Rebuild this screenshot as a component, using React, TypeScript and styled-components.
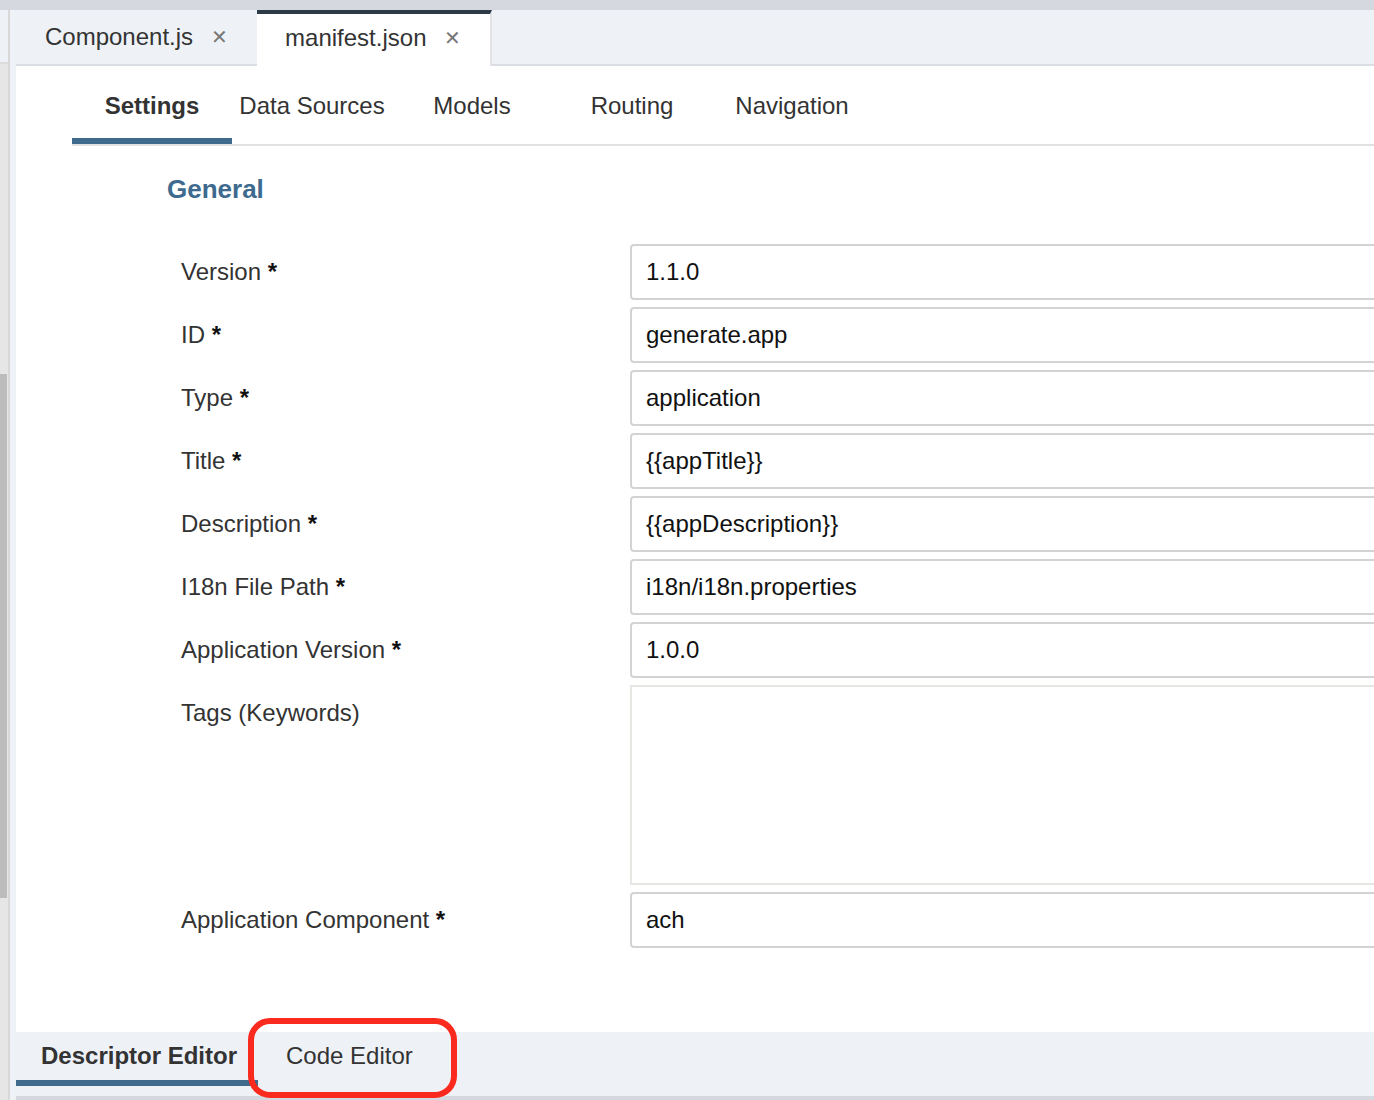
import React from "react";
import styled, { createGlobalStyle } from "styled-components";

const Global = createGlobalStyle`
  html, body { margin: 0; padding: 0; }
  body { font-family: "Liberation Sans", Arial, Helvetica, sans-serif; background: #eef2f7; overflow: hidden; }
  * { box-sizing: border-box; }
`;

const Page = styled.div`
  height: 1100px;
  display: flex;
  flex-direction: column;
  overflow: hidden;
`;

const TopStrip = styled.div`
  height: 10px;
  flex: none;
  background: #d5d9df;
`;

const Body = styled.div`
  flex: 1;
  display: flex;
  min-height: 0;
`;

const ScrollTrack = styled.div`
  width: 8px;
  flex: none;
  display: flex;
  flex-direction: column;
  background: #e6e6e6;
  border-right: 2px solid #d8d8d8;
  box-sizing: content-box;
`;

const TrackHead = styled.div`
  height: 54px;
  background: #eef2f7;
  border-bottom: 2px solid #dcdcdc;
`;

const Thumb = styled.div`
  margin-top: 310px;
  height: 524px;
  width: 7px;
  background: #bcbcbc;
`;

const Main = styled.div`
  flex: 1;
  display: flex;
  flex-direction: column;
  min-width: 0;
  padding-left: 6px;
  background: #eef2f7;
`;

const FileTabs = styled.div`
  height: 56px;
  flex: none;
  display: flex;
  border-bottom: 2px solid #dadde2;
`;

const FileTab = styled.div<{ $active?: boolean }>`
  height: ${(p) => (p.$active ? "56px" : "54px")};
  margin-bottom: ${(p) => (p.$active ? "-2px" : "0")};
  display: flex;
  align-items: center;
  gap: 18px;
  padding: 0 29px 4px ${(p) => (p.$active ? "28px" : "29px")};
  font-size: 24px;
  color: #333;
  background: ${(p) => (p.$active ? "#ffffff" : "transparent")};
  border-top: ${(p) => (p.$active ? "4px solid #2d3a48" : "4px solid transparent")};
  border-right: ${(p) => (p.$active ? "2px solid #e2e4e8" : "0")};
`;

const Close = styled.span`
  font-size: 20px;
  color: #777;
  line-height: 1;
`;

const Panel = styled.div`
  flex: 1;
  background: #ffffff;
  overflow: hidden;
  display: flex;
  flex-direction: column;
`;

const SubTabs = styled.div`
  margin-left: 56px;
  display: flex;
  border-bottom: 2px solid #e0e1e3;
  flex: none;
`;

const SubTab = styled.div<{ $active?: boolean }>`
  width: 160px;
  height: 78px;
  display: flex;
  align-items: center;
  justify-content: center;
  padding-top: 8px;
  font-size: 24px;
  color: #333;
  font-weight: ${(p) => (p.$active ? 700 : 400)};
  border-bottom: 6px solid ${(p) => (p.$active ? "#3f6a8c" : "transparent")};
`;

const Section = styled.div`
  padding: 28px 0 0 151px;
`;

const Heading = styled.h2`
  margin: 0;
  font-size: 26px;
  line-height: 30px;
  font-weight: 700;
  color: #3d6a8e;
`;

const Form = styled.div`
  margin-top: 40px;
  margin-left: 14px;
  display: grid;
  grid-template-columns: 449px 900px;
  row-gap: 7px;
`;

const Label = styled.div`
  font-size: 24px;
  line-height: 56px;
  color: #333;
  white-space: nowrap;
`;

const Star = styled.span`
  font-weight: 700;
  color: #111;
`;

const Field = styled.div<{ $tall?: boolean }>`
  height: ${(p) => (p.$tall ? "200px" : "56px")};
  border: 2px solid ${(p) => (p.$tall ? "#e6e6e2" : "#d3d3d3")};
  border-radius: ${(p) => (p.$tall ? "0" : "4px")};
  padding: 0 14px;
  display: flex;
  align-items: center;
  font-size: 24px;
  color: #111;
  background: #fff;
`;

const BottomBar = styled.div`
  height: 64px;
  flex: none;
  display: flex;
  align-items: flex-start;
`;

const EditorTab = styled.div<{ $active?: boolean }>`
  position: relative;
  height: 54px;
  display: flex;
  align-items: center;
  padding: 0 ${(p) => (p.$active ? "21px 0 25px" : "28px 0 28px")};
  font-size: 24px;
  color: #333;
  font-weight: ${(p) => (p.$active ? 700 : 400)};
  border-bottom: 6px solid ${(p) => (p.$active ? "#3f6a8c" : "transparent")};
`;

const Highlight = styled.div`
  position: absolute;
  left: -10px;
  top: -14px;
  width: 209px;
  height: 80px;
  border: 6px solid #fb2a1e;
  border-radius: 22px;
  pointer-events: none;
`;

const BottomStrip = styled.div`
  height: 4px;
  flex: none;
  background: #d5d9df;
`;

const fields: { label: string; required?: boolean; value: string; tall?: boolean }[] = [
  { label: "Version", required: true, value: "1.1.0" },
  { label: "ID", required: true, value: "generate.app" },
  { label: "Type", required: true, value: "application" },
  { label: "Title", required: true, value: "{{appTitle}}" },
  { label: "Description", required: true, value: "{{appDescription}}" },
  { label: "I18n File Path", required: true, value: "i18n/i18n.properties" },
  { label: "Application Version", required: true, value: "1.0.0" },
  { label: "Tags (Keywords)", value: "", tall: true },
  { label: "Application Component", required: true, value: "ach" },
];

export default function App() {
  return (
    <Page>
      <Global />
      <TopStrip />
      <Body>
        <ScrollTrack>
          <TrackHead />
          <Thumb />
        </ScrollTrack>
        <Main>
          <FileTabs>
            <FileTab>
              Component.js <Close>✕</Close>
            </FileTab>
            <FileTab $active>
              manifest.json <Close>✕</Close>
            </FileTab>
          </FileTabs>
          <Panel>
            <SubTabs>
              <SubTab $active>Settings</SubTab>
              <SubTab>Data Sources</SubTab>
              <SubTab>Models</SubTab>
              <SubTab>Routing</SubTab>
              <SubTab>Navigation</SubTab>
            </SubTabs>
            <Section>
              <Heading>General</Heading>
              <Form>
                {fields.map((f) => (
                  <React.Fragment key={f.label}>
                    <Label>
                      {f.label}
                      {f.required && <Star> *</Star>}
                    </Label>
                    <Field $tall={f.tall}>{f.value}</Field>
                  </React.Fragment>
                ))}
              </Form>
            </Section>
          </Panel>
          <BottomBar>
            <EditorTab $active>Descriptor Editor</EditorTab>
            <EditorTab>
              Code Editor
              <Highlight />
            </EditorTab>
          </BottomBar>
          <BottomStrip />
        </Main>
      </Body>
    </Page>
  );
}
